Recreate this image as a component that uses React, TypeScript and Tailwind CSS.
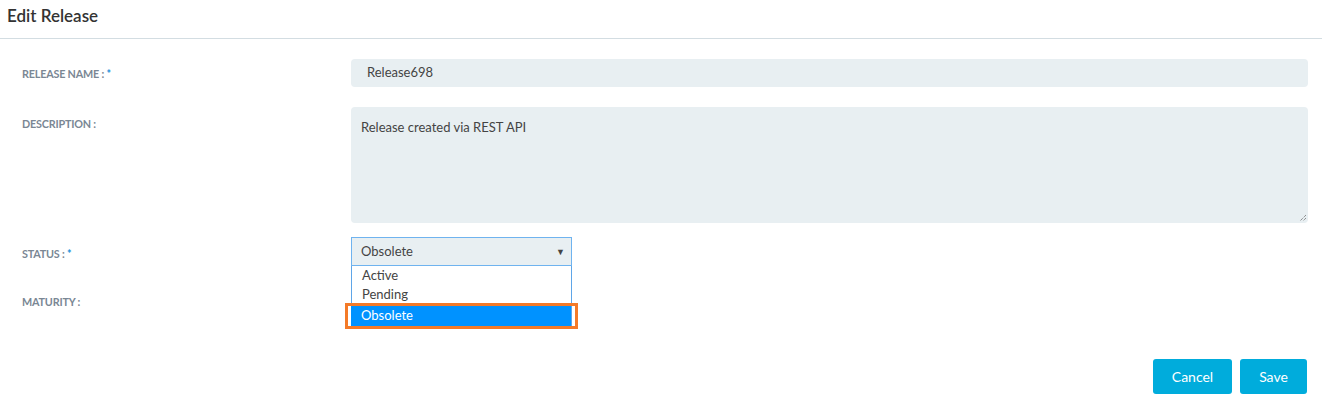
import React from "react";

const font = { fontFamily: "Lato, 'Noto Sans', sans-serif" };

export default function App() {
  return (
    <div className="w-[1322px] h-[402px] bg-white relative overflow-hidden text-[#333]" style={font}>
      <div className="h-[39px] border-b border-[#d3dde2] pl-[7px] pt-[4px]">
        <h1 className="text-[17px] font-semibold text-[#333] leading-[24px]">Edit Release</h1>
      </div>
      <div className="pl-[22px] pr-[14px] pt-[20px]">
        <div className="flex items-start">
          <div className="w-[329px] pt-[9px] text-[10.8px] font-bold text-[#7a8794] tracking-[-0.2px] leading-[12px]">
            RELEASE NAME : <span className="text-[#1a8fd8] align-top">*</span>
          </div>
          <div className="flex-1 h-[28px] rounded-[4px] bg-[#e8eff2] pl-[16px] flex items-center text-[13px] text-[#444]">
            Release698
          </div>
        </div>
        <div className="flex items-start mt-[20px]">
          <div className="w-[329px] pt-[11px] text-[10.8px] font-bold text-[#7a8794] tracking-[-0.2px] leading-[12px]">
            DESCRIPTION :
          </div>
          <div className="flex-1 h-[116px] rounded-[4px] bg-[#e8eff2] pl-[10px] pt-[11px] text-[13px] text-[#444] relative">
            Release created via REST API
            <svg className="absolute right-[1px] bottom-[1px]" width="9" height="9" viewBox="0 0 9 9">
              <path d="M8 2 L2 8 M8 5 L5 8" stroke="#666" strokeWidth="1" strokeDasharray="1 1" />
            </svg>
          </div>
        </div>
        <div className="flex items-start mt-[14px]">
          <div className="w-[329px] pt-[11px] text-[10.8px] font-bold text-[#7a8794] tracking-[-0.2px] leading-[12px]">
            STATUS : <span className="text-[#1a8fd8] align-top">*</span>
          </div>
          <div className="relative">
            <div className="w-[221px] h-[29px] border border-[#6fb3ef] bg-[#e8eff2] pl-[9px] pr-[5px] flex items-center justify-between text-[13px] text-[#444]">
              <span>Obsolete</span>
              <span className="text-[9px] text-[#444] mr-[1px]">▼</span>
            </div>
            <div className="absolute left-0 top-[29px] w-[221px] h-[62px] bg-white border-x border-b border-[#5fa6e8] text-[13px] text-[#444] leading-[19px]">
              <div className="pl-[10px] pt-[0px]">Active</div>
              <div className="pl-[10px]">Pending</div>
            </div>
            <div className="absolute left-[-6px] top-[66px] w-[233px] h-[26px] border-[3px] border-[#f47a28]">
              <div className="ml-[3px] mr-[4px] h-[20px] bg-[#0092ff] text-white text-[13px] leading-[18px] pl-[10px]">
                Obsolete
              </div>
            </div>
          </div>
        </div>
        <div className="mt-[30px] text-[10.8px] font-bold text-[#7a8794] tracking-[-0.2px] leading-[12px]">
          MATURITY :
        </div>
      </div>
      <div className="absolute right-[15px] top-[359px] flex gap-[8px]">
        <button className="w-[79px] h-[35px] rounded-[3px] bg-[#00acdc] text-white text-[14px]">Cancel</button>
        <button className="w-[67px] h-[35px] rounded-[3px] bg-[#00acdc] text-white text-[14px]">Save</button>
      </div>
    </div>
  );
}
